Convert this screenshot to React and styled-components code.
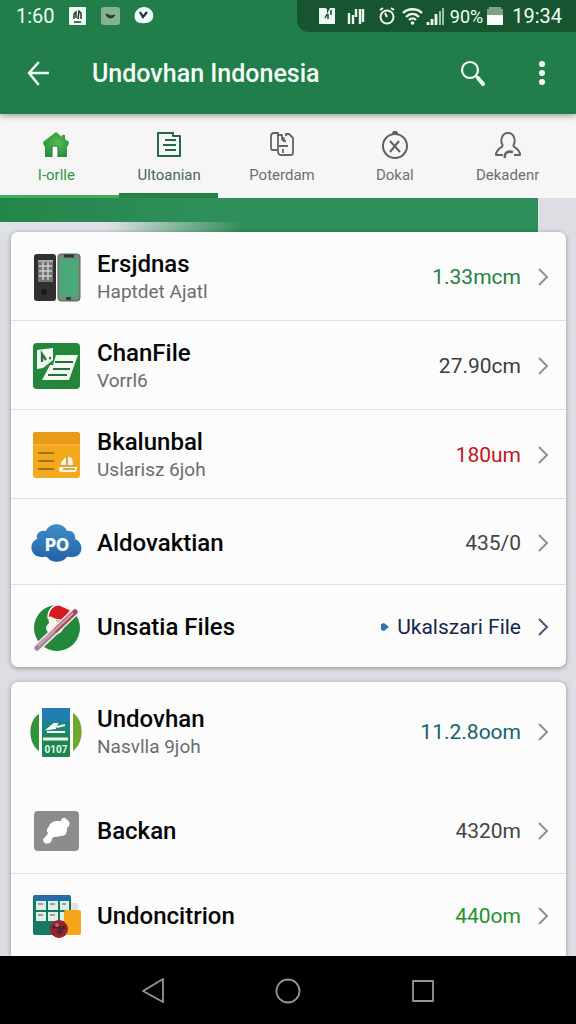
import React, { useState } from 'react';
import styled, { createGlobalStyle } from 'styled-components';

const tabs = [
  { id: 'home', label: 'I-orlle', icon: HomeIcon },
  { id: 'notes', label: 'Ultoanian', icon: NotesIcon },
  { id: 'copy', label: 'Poterdam', icon: CopyIcon },
  { id: 'clock', label: 'Dokal', icon: ClockIcon },
  { id: 'user', label: 'Dekadenr', icon: UserIcon },
];

const devices = [
  { title: 'Ersjdnas', sub: 'Haptdet Ajatl', value: '1.33mcm', color: '#22803f', height: 89, icon: PhonesIcon },
  { title: 'ChanFile', sub: 'Vorrl6', value: '27.90cm', color: '#3c3c3c', height: 89, icon: SheetIcon },
  { title: 'Bkalunbal', sub: 'Uslarisz 6joh', value: '180um', color: '#c4161c', height: 89, icon: FolderIcon },
  { title: 'Aldovaktian', value: '435/0', color: '#444', height: 86, icon: CloudIcon },
  { title: 'Unsatia Files', value: 'Ukalszari File', color: '#14274f', height: 82, marker: true, icon: DiscIcon },
];

const downloads = [
  { title: 'Undovhan', sub: 'Nasvlla 9joh', value: '11.2.8oom', color: '#12646e', height: 105, plain: true, icon: BadgeIcon },
  { title: 'Backan', value: '4320m', color: '#444', height: 87, icon: ToolIcon },
  { title: 'Undoncitrion', value: '440om', color: '#22912f', height: 82, icon: BoardIcon },
];

const Row = ({ item }) => {
  const Icon = item.icon;
  return (
    <StRow $height={item.height} $plain={item.plain}>
      <StRowButton type="button">
        <Icon />
        <StRowText>
          <StRowTitle>{item.title}</StRowTitle>
          {item.sub && <StRowSub>{item.sub}</StRowSub>}
        </StRowText>
        {item.marker && <MarkerIcon />}
        <StValue $color={item.color}>{item.value}</StValue>
        <ChevronIcon color={item.marker ? '#4b5575' : '#919191'} />
      </StRowButton>
    </StRow>
  );
};

const App = () => {
  const [active, setActive] = useState('notes');

  return (
    <StPage>
      <GlobalStyle />
      <StHeader>
        <StStatusBar>
          <StStatusLeft>
            <StClock>1:60</StClock>
            <StatusApps />
          </StStatusLeft>
          <StStatusRight>
            <StatusSignals />
            <StStatusText>90%</StStatusText>
            <BatteryIcon />
            <StClock>19:34</StClock>
          </StStatusRight>
        </StStatusBar>
        <StToolbar>
          <StIconButton type="button" aria-label="Back">
            <svg width="26" height="26" viewBox="0 0 26 26" fill="none" stroke="#f2fff6" strokeWidth="2.6" strokeLinecap="round" strokeLinejoin="round">
              <path d="M26 13H6M15 3 6 13l9 11" />
            </svg>
          </StIconButton>
          <StTitle>Undovhan Indonesia</StTitle>
          <StIconButton type="button" aria-label="Search">
            <svg width="28" height="28" viewBox="0 0 28 28" fill="none" stroke="#f2fff6" strokeLinecap="round">
              <circle cx="10" cy="11" r="8" strokeWidth="2.2" />
              <path d="m16 17 2 2" strokeWidth="2.4" />
              <path d="m18 19 5 6" strokeWidth="4" />
            </svg>
          </StIconButton>
          <StIconButton type="button" aria-label="More">
            <svg width="26" height="28" viewBox="0 0 26 28" fill="#f2fff6">
              <circle cx="13" cy="5" r="3" />
              <circle cx="13" cy="14" r="3" />
              <circle cx="13" cy="23" r="3" />
            </svg>
          </StIconButton>
        </StToolbar>
      </StHeader>

      <StTabs>
        {tabs.map(({ id, label, icon: Icon }) => (
          <StTab key={id} type="button" $home={id === 'home'} $active={active === id} onClick={() => setActive(id)}>
            <Icon />
            <span>{label}</span>
          </StTab>
        ))}
      </StTabs>

      <StBanner />

      <StContent>
        <StCard>
          {devices.map((item) => (
            <Row key={item.title} item={item} />
          ))}
        </StCard>
        <StCard $last>
          {downloads.map((item) => (
            <Row key={item.title} item={item} />
          ))}
        </StCard>
      </StContent>

      <StNav>
        <StNavButton type="button" aria-label="Back">
          <svg width="28" height="28" viewBox="0 0 28 28" fill="none" stroke="#969696" strokeWidth="1.8" strokeLinejoin="round">
            <path d="M24 3v23L4 15z" />
          </svg>
        </StNavButton>
        <StNavButton type="button" aria-label="Home">
          <svg width="28" height="28" viewBox="0 0 28 28" fill="none" stroke="#969696" strokeWidth="1.8">
            <circle cx="14" cy="15" r="11.5" />
          </svg>
        </StNavButton>
        <StNavButton type="button" aria-label="Recent">
          <svg width="28" height="28" viewBox="0 0 28 28" fill="none" stroke="#969696" strokeWidth="1.8" strokeLinejoin="round">
            <rect x="4" y="5" width="20" height="20" />
          </svg>
        </StNavButton>
      </StNav>
    </StPage>
  );
};

export default App;

/* status bar icons */

function StatusApps() {
  return (
    <svg width="86" height="20" viewBox="0 0 86 20">
      <rect x="1" y="1" width="17" height="18" rx="1" fill="#f2fff6" />
      <path d="M6 13V8l2-2v6M10 13l1-8 2 2v6M6 16h7" fill="none" stroke="#26352b" strokeWidth="1.5" />
      <rect x="33" y="1" width="19" height="18" rx="3" fill="#84b394" />
      <path d="M38 8c1 5 7 5 9 1l-4 1z" fill="#1f3b2a" stroke="#1f3b2a" />
      <path d="M69 4c4-4 10-4 14 0 3 3 3 9 0 11-3 3-12 3-15 0-2-3-2-8 1-11z" fill="#f2fff6" />
      <path d="m72 6 3 5 4-5" fill="none" stroke="#26352b" strokeWidth="2.4" />
    </svg>
  );
}

function StatusSignals() {
  return (
    <svg width="126" height="20" viewBox="0 0 126 20" fill="none" stroke="#eefaf1">
      <path d="M1 2h6l2 1v5l3-6h5v16H1z" fill="#eefaf1" stroke="none" />
      <path d="m9 8-2 4M10 8v5M13 4v5" stroke="#174d2e" strokeWidth="1.5" />
      <path d="M31 7v11M35 9v9M38 3v8M42 3v15M45 3v13" strokeWidth="2.4" />
      <circle cx="69" cy="11" r="6.5" strokeWidth="2" />
      <path d="m62 4 3-2M73 2l3 2M67 7l2 4" strokeWidth="2" />
      <path d="M85 7c5-5 14-5 19 0M88 11c4-4 9-4 13 0M91 14c2-2 5-2 7 0" strokeWidth="2.4" />
      <circle cx="94.500" cy="17" r="1.8" fill="#eefaf1" stroke="none" />
      <path d="M110 19v-3M114 19v-6M118 19V8" strokeWidth="2.8" />
      <path d="M122 19V5M125 19V2" stroke="#a0bfa9" strokeWidth="2" />
    </svg>
  );
}

function BatteryIcon() {
  return (
    <svg width="18" height="20" viewBox="0 0 18 20">
      <path d="M3 1h12v2h2v6H1V3h2z" fill="#80a28a" />
      <path d="M1 9h16v10H1z" fill="#f6fff9" />
    </svg>
  );
}

/* tab icons */

function HomeIcon() {
  return (
    <svg width="28" height="28" viewBox="0 0 28 28">
      <defs>
        <radialGradient id="roof" cx="55%" cy="45%" r="60%">
          <stop stopColor="#5cb955" />
          <stop offset="1" stopColor="#239236" />
        </radialGradient>
      </defs>
      <path d="M14 1 1 11l1 4h1v11h22V15h1l1-4-4-3V4h-3v2z" fill="url(#roof)" />
      <path d="M10 26V15h6v11" fill="#fbfbfb" stroke="#1c7430" />
    </svg>
  );
}

function NotesIcon() {
  return (
    <svg width="28" height="28" viewBox="0 0 28 28" fill="none" stroke="#286744" strokeWidth="2">
      <path d="M3 2h15v3h7v20H3z" strokeLinejoin="round" />
      <path d="M10 9h11M8 14h13M10 19h11" />
    </svg>
  );
}

function CopyIcon() {
  return (
    <svg width="28" height="28" viewBox="0 0 28 28" fill="none" stroke="#646464" strokeWidth="1.8" strokeLinejoin="round">
      <path d="M9 19H5c-2 0-2-1-2-3V5c0-2 1-3 3-3h4v3" />
      <path d="M10 4v16c0 3 1 4 3 4h10c2 0 2-1 2-3V7l-4-4h-3v2M10 4h4v3" />
      <path d="M11 15h9M15 10h3M15 18v4" />
      <circle cx="15" cy="8" r="1" />
    </svg>
  );
}

function ClockIcon() {
  return (
    <svg width="28" height="28" viewBox="0 0 28 28" fill="none" stroke="#5f5f5f" strokeWidth="2">
      <circle cx="14" cy="15" r="12" />
      <path d="m9 10 10 11M18 10 9 21" />
      <path d="M12 3c0-3 4-3 4 0z" fill="#5f5f5f" />
    </svg>
  );
}

function UserIcon() {
  return (
    <svg width="28" height="28" viewBox="0 0 28 28" fill="none" stroke="#656565" strokeWidth="2" strokeLinejoin="round">
      <path d="M9 15c-3-4-2-13 5-13s8 9 5 13M9 15c-3 2-7 4-7 9h7M19 15c3 2 7 4 7 9h-6" />
      <path d="M11 27c-1-6 3-7 8-6" strokeWidth="2.6" />
    </svg>
  );
}

/* row icons */

function PhonesIcon() {
  return (
    <svg width="52" height="52" viewBox="0 0 52 52">
      <rect x="4" y="3" width="22" height="47" rx="3" fill="#303030" />
      <rect x="8" y="9" width="15" height="22" fill="#737573" />
      <path d="M8 9h15v2H8z" fill="#aaa" />
      <path d="M9 15h13M9 20h13M9 25h13M13 11v18M18 11v18" stroke="#c9cccb" strokeWidth="1.5" />
      <circle cx="14" cy="41" r="3" fill="#191919" />
      <rect x="28" y="3" width="22" height="47" rx="3" fill="#718d80" stroke="#52675c" />
      <path d="M30 8h18v37H30z" fill="#4ba978" />
      <path d="M34 5h10" stroke="#29372f" strokeWidth="3" />
      <rect x="36" y="46" width="5" height="3" rx="1" fill="#274437" />
    </svg>
  );
}

function SheetIcon() {
  return (
    <svg width="52" height="52" viewBox="0 0 52 52">
      <rect x="3" y="3" width="47" height="46" rx="4" fill="#23863a" />
      <path d="M7 10 23 8v12l-10 8-6 1z" fill="#f1f9ee" />
      <path d="M12 22v-8l4 6M19 18h2" fill="none" stroke="#316d42" strokeWidth="2.4" />
      <path d="M26 15h22l-9 25H12l8-15h3z" fill="#f1f9ee" />
      <path d="M25 22h18M23 29h17M18 35h19" stroke="#276e3b" strokeWidth="2.2" />
    </svg>
  );
}

function FolderIcon() {
  return (
    <svg width="52" height="52" viewBox="0 0 52 52">
      <rect x="3" y="3" width="47" height="46" rx="3" fill="#f3a91b" />
      <path d="M3 16V6q0-3 3-3h41q3 0 3 3v10z" fill="#e99b17" />
      <path d="M3 16h47" stroke="#ffc242" />
      <path d="M8 24h16M8 32h16M8 40h16" stroke="#9c711b" strokeWidth="2" />
      <path d="M29 41c0-4 3-5 2-8l6-6 5 2 1 7 4 2-1 5H30z" fill="#fff5df" />
      <path d="M37 27v9M30 37h16M33 40h12" stroke="#c98c22" strokeWidth="1.5" />
    </svg>
  );
}

function CloudIcon() {
  return (
    <svg width="52" height="52" viewBox="0 0 52 52">
      <defs>
        <linearGradient id="cloud" x1="0" y1="0" x2="0" y2="1">
          <stop stopColor="#3f8ec9" />
          <stop offset="1" stopColor="#2263a6" />
        </linearGradient>
      </defs>
      <path d="M16 14c3-9 18-9 21 0 5-1 9 3 8 8 9 3 9 18-3 18-4 0-5-1-6 1-4 5-15 5-18 0-2-2-3-1-7-1-12-1-12-15-4-18-1-6 3-9 9-8z" fill="url(#cloud)" />
      <text x="27" y="34" textAnchor="middle" fill="#fff" fontFamily="Inter, sans-serif" fontSize="17" fontWeight="800">PO</text>
    </svg>
  );
}

function DiscIcon() {
  return (
    <svg width="52" height="52" viewBox="0 0 52 52">
      <circle cx="27" cy="27" r="23" fill="#24883b" />
      <path d="M18 17C18 8 24 3 30 4l11 5-7 11z" fill="#d71920" stroke="#fff" strokeWidth="1.5" />
      <path d="M18 16c6-3 7 6 14 5 5 6-2 13-8 13-7-1-11-7-5-12z" fill="#f5f4ed" />
      <path d="M7 47 45 11" stroke="#f5e9eb" strokeWidth="8" strokeLinecap="round" />
      <path d="M7 47 45 11" stroke="#9f829f" strokeWidth="5" strokeLinecap="round" />
      <path d="M26 29 45 11" stroke="#a54c53" strokeWidth="5" strokeLinecap="round" />
      <path d="m8 45 35-33" stroke="#d6a1aa" strokeWidth="2" />
    </svg>
  );
}

function BadgeIcon() {
  return (
    <svg width="52" height="52" viewBox="0 0 52 52">
      <path d="M9 8v37C-2 38-3 15 9 8z" fill="#31933b" />
      <path d="M43 7c11 7 12 29 0 38z" fill="#70a72c" />
      <rect x="12" y="2" width="28" height="49" rx="1" fill="#1c8550" />
      <path d="M12 2h28v14H12z" fill="#217fb0" />
      <path d="M12 16h28v12H12z" fill="#1e827e" />
      <path d="m18 23 6-5h3l-2 4zM27 21l8-2M17 26h18" fill="#f1fff2" stroke="#f1fff2" strokeWidth="2" />
      <path d="M13 33h25" stroke="#f1fff2" strokeWidth="3" />
      <text x="26" y="47" textAnchor="middle" fill="#dcffe3" fontFamily="Roboto, sans-serif" fontSize="10" fontWeight="700">0107</text>
    </svg>
  );
}

function ToolIcon() {
  return (
    <svg width="52" height="52" viewBox="0 0 52 52">
      <rect x="4" y="6" width="45" height="40" rx="4" fill="#8b8c8c" />
      <path d="M14 37c-3-4 2-4 4-9-3-4 1-5 2-9 4-4 8-3 11-3 1-5 5-3 6-1 4 2 3 6 0 8 0 5-1 8-6 8l-6 1c-3 0-3 2-4 5-3 2-6 2-7 0z" fill="#fff" />
    </svg>
  );
}

function BoardIcon() {
  return (
    <svg width="52" height="52" viewBox="0 0 52 52">
      <rect x="3" y="5" width="38" height="40" rx="2" fill="#167a61" />
      <path d="M4 5h36v6H4z" fill="#246da9" />
      <path d="M6 11h10v9H6zM18 11h10v9H18zM30 11h9v9h-9zM6 22h10v9H6zM18 22h10v9H18zM30 22h9v9h-9z" fill="#e3eee7" />
      <path d="M8 14h5M20 14h5M32 14h4M8 25h5M20 25h5" stroke="#86aaa0" strokeWidth="2" />
      <path d="M41 13h7v10h-7z" fill="#dce5dd" />
      <rect x="34" y="20" width="17" height="25" rx="2" fill="#f4a51c" />
      <circle cx="29" cy="39" r="9" fill="#9b2028" />
      <path d="M23 38c3-4 7 3 12-1M27 42h5" stroke="#332c41" strokeWidth="3" fill="none" />
      <circle cx="27" cy="35" r="2" fill="#df5960" />
    </svg>
  );
}

function MarkerIcon() {
  return (
    <svg width="8" height="10" viewBox="0 0 8 10">
      <path d="M0 2 3 1l5 4-5 4-3-1z" fill="#2c76b5" />
    </svg>
  );
}

function ChevronIcon({ color }) {
  return (
    <svg width="12" height="20" viewBox="0 0 12 20" fill="none" stroke={color} strokeWidth="2">
      <path d="m2 2 8 8-8 8" />
    </svg>
  );
}

const GlobalStyle = createGlobalStyle`
  * {
    box-sizing: border-box;
  }

  body {
    margin: 0;
    background: #dcdee3;
    font-family: Roboto, 'Liberation Sans', sans-serif;
  }

  button {
    border: none;
    padding: 0;
    background: none;
    font-family: inherit;
    cursor: pointer;
  }

  svg {
    display: block;
    flex-shrink: 0;
  }
`;

const StPage = styled.div`
  min-height: 100vh;
  display: flex;
  flex-direction: column;
`;

const StHeader = styled.header`
  position: relative;
  z-index: 1;
  background: #217e4a;
  color: #f2fff6;
  box-shadow: 0 2px 6px rgba(0, 0, 0, 0.35);
`;

const StStatusBar = styled.div`
  height: 32px;
  display: flex;
  justify-content: space-between;
`;

const StStatusLeft = styled.div`
  display: flex;
  align-items: center;
  gap: 13px;
  padding-left: 16px;
`;

const StStatusRight = styled.div`
  display: flex;
  align-items: center;
  gap: 3px;
  padding: 0 14px 0 21px;
  background: #165530;
  border-bottom-left-radius: 12px;
`;

const StClock = styled.span`
  font-size: 20px;
  line-height: 32px;

  svg + & {
    margin-left: 5px;
  }
`;

const StStatusText = styled.span`
  font-size: 18px;
  margin-left: 3px;
`;

const StToolbar = styled.div`
  height: 82px;
  display: flex;
  align-items: center;
  padding: 0 14px 0 16px;
`;

const StIconButton = styled.button`
  width: 40px;
  height: 48px;
  display: flex;
  align-items: center;
  justify-content: center;

  & + & {
    margin-left: 28px;
  }
`;

const StTitle = styled.h1`
  flex: 1;
  margin: 0;
  padding-left: 36px;
  font-size: 25px;
  font-weight: 500;
`;

const StTabs = styled.nav`
  display: grid;
  grid-template-columns: repeat(5, 1fr);
  padding-right: 12px;
  background: linear-gradient(#43ad5b, #43ad5b) left bottom / 21% 3px no-repeat #f6f6f7;
`;

const StTab = styled.button`
  height: 84px;
  display: flex;
  flex-direction: column;
  align-items: center;
  gap: 5px;
  padding-top: 17px;
  font-size: 15px;
  line-height: 22px;
  color: ${({ $home, $active }) => ($home ? '#2f9a3c' : $active ? '#4c6556' : '#707070')};
  background: ${({ $active }) =>
    $active ? 'linear-gradient(#238247, #238247) center bottom / 88% 5px no-repeat' : 'none'};
`;

const StBanner = styled.div`
  height: 34px;
  margin-right: 38px;
  background:
    linear-gradient(90deg, #dfe2e6 20%, rgba(223, 226, 230, 0) 45%) left bottom / 100% 10px no-repeat,
    linear-gradient(90deg, #238649, #2f8f5a 40%);
`;

const StContent = styled.main`
  flex: 1;
  display: flex;
  flex-direction: column;
  gap: 15px;
  padding: 0 10px 0 11px;
`;

const StCard = styled.ul`
  flex: ${({ $last }) => ($last ? 1 : 'none')};
  margin: 0;
  padding: 0;
  list-style: none;
  background: #fcfcfc;
  border-radius: ${({ $last }) => ($last ? '7px 7px 0 0' : '7px')};
  box-shadow: 0 1px 5px rgba(0, 0, 0, 0.35);
`;

const StRow = styled.li`
  height: ${({ $height }) => $height}px;
  padding-bottom: ${({ $plain }) => ($plain ? '8px' : 0)};
  border-bottom: ${({ $plain }) => ($plain ? 'none' : '1px solid #dedfe0')};

  &:last-child {
    border-bottom: none;
  }
`;

const StRowButton = styled.button`
  width: 100%;
  height: 100%;
  display: flex;
  align-items: center;
  padding: 2px 17px 0 19px;
  text-align: left;
`;

const StRowText = styled.span`
  flex: 1;
  display: flex;
  flex-direction: column;
  padding-left: 15px;
`;

const StRowTitle = styled.span`
  color: #050505;
  font-size: 24px;
  line-height: 30px;
  font-weight: 500;
`;

const StRowSub = styled.span`
  color: #6c6c6c;
  font-size: 19px;
  line-height: 26px;
`;

const StValue = styled.span`
  padding: 0 16px 0 8px;
  color: ${({ $color }) => $color};
  font-size: 21px;
`;

const StNav = styled.footer`
  height: 68px;
  display: flex;
  align-items: center;
  justify-content: center;
  gap: 95px;
  background: #000;
`;

const StNavButton = styled.button`
  width: 40px;
  height: 40px;
  display: flex;
  align-items: center;
  justify-content: center;
`;
